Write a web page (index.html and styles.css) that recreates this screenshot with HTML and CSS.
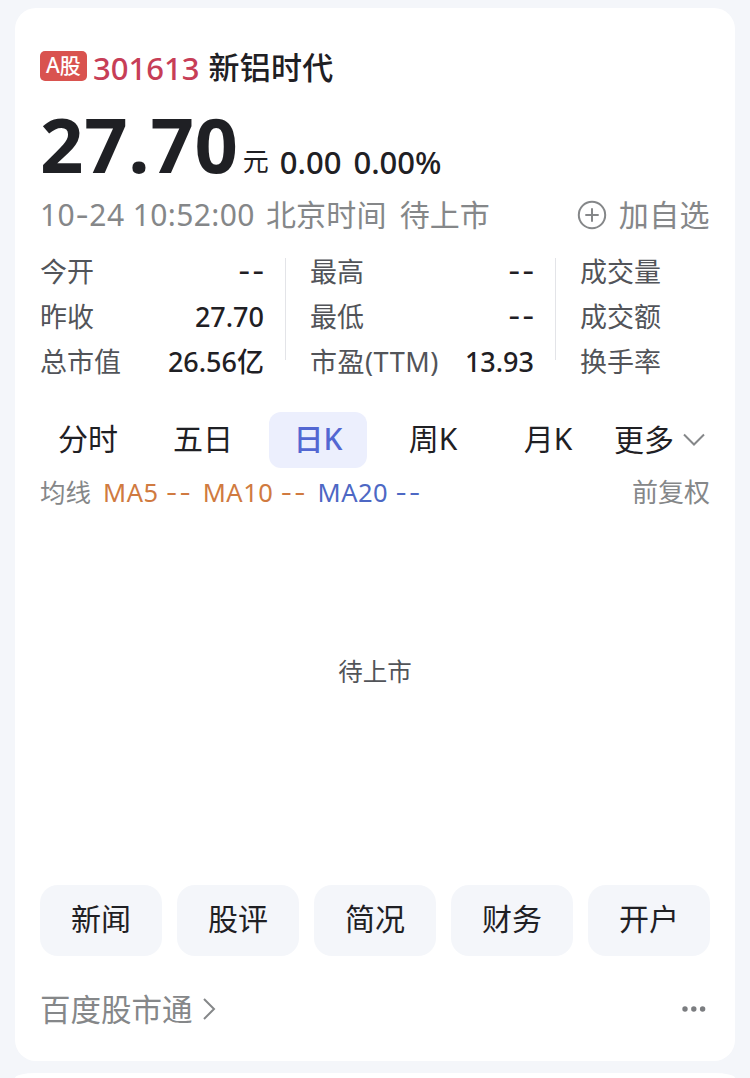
FILE: index.html
```html
<!DOCTYPE html>
<html lang="zh-CN">
<head>
    <meta charset="UTF-8">
    <meta name="viewport" content="width=device-width, initial-scale=1.0">
    <title>新铝时代 301613</title>
    <link rel="stylesheet" href="styles.css">
</head>
<body>

    <div class="card">
        <!-- Stock name -->
        <div class="title">
            <span class="badge">A股</span>
            <span class="code">301613</span>
            <span class="name">新铝时代</span>
        </div>

        <!-- Price -->
        <div class="price-row">
            <span class="price">27.70</span>
            <span class="unit">元</span>
            <span class="change">0.00</span>
            <span class="change percent">0.00%</span>
        </div>

        <div class="status">
            <span class="time">10<span class="dash">-</span>24 10:52:00</span>
            <span class="zone">北京时间</span>
            <span class="state">待上市</span>
            <a class="follow">
                <svg width="30" height="30" viewBox="0 0 30 30" fill="none" stroke="#858789" stroke-width="2">
                    <circle cx="15" cy="15" r="13.2"/>
                    <path d="M15 8.3v13.4M8.3 15h13.4"/>
                </svg>
                加自选
            </a>
        </div>

        <!-- Figures -->
        <div class="stats">
            <div class="col">
                <div class="item"><span>今开</span><b class="none">--</b></div>
                <div class="item"><span>昨收</span><b>27.70</b></div>
                <div class="item"><span>总市值</span><b>26.56亿</b></div>
            </div>
            <div class="col">
                <div class="item"><span>最高</span><b class="none">--</b></div>
                <div class="item"><span>最低</span><b class="none">--</b></div>
                <div class="item"><span class="pe">市盈(TTM)</span><b>13.93</b></div>
            </div>
            <div class="col">
                <div class="item"><span>成交量</span></div>
                <div class="item"><span>成交额</span></div>
                <div class="item"><span>换手率</span></div>
            </div>
        </div>

        <!-- Chart tabs -->
        <div class="tabs">
            <a class="tab">分时</a>
            <a class="tab">五日</a>
            <a class="tab active">日K</a>
            <a class="tab">周K</a>
            <a class="tab">月K</a>
            <a class="more">更多
                <svg width="24" height="14" viewBox="0 0 24 14" fill="none" stroke="#858789" stroke-width="2">
                    <path d="M2 1.5l10 10 10-10"/>
                </svg>
            </a>
        </div>

        <div class="legend">
            <span class="avg">均线</span>
            <span class="ma orange">MA5 <i>--</i></span>
            <span class="ma orange">MA10 <i>--</i></span>
            <span class="ma blue">MA20 <i>--</i></span>
            <span class="adjust">前复权</span>
        </div>

        <div class="chart">待上市</div>

        <div class="links">
            <a>新闻</a>
            <a>股评</a>
            <a>简况</a>
            <a>财务</a>
            <a>开户</a>
        </div>

        <div class="footer">
            <span>百度股市通</span>
            <svg class="arrow" width="14" height="24" viewBox="0 0 14 24" fill="none" stroke="#858789" stroke-width="2">
                <path d="M2 2l10 10-10 10"/>
            </svg>
            <svg class="dots" width="24" height="6" viewBox="0 0 24 6" fill="#7b7d80">
                <circle cx="3" cy="3" r="2.7"/>
                <circle cx="11.8" cy="3" r="2.7"/>
                <circle cx="20.6" cy="3" r="2.7"/>
            </svg>
        </div>
    </div>

    <div class="card next"></div>

</body>
</html>
```

FILE: styles.css
```css
* {
    box-sizing: border-box;
}
body {
    margin: 0;
    height: 1078px;
    padding: 8px 15px 0;
    overflow: hidden;
    background: #f4f6fa;
    color: #1f2024;
    font-family: "Noto Sans", "Noto Sans CJK SC", sans-serif;
}
.card {
    height: 1053px;
    padding: 37px 25px 0;
    border-radius: 21px;
    background: #fff;
}
.next {
    height: 5px;
    margin-top: 12px;
    padding: 0;
    border-radius: 21px 21px 0 0 / 5px 5px 0 0;
}
.title {
    display: flex;
    align-items: center;
    height: 46px;
    font-size: 31px;
    line-height: 44px;
    font-weight: 500;
}
.badge {
    width: 47px;
    height: 30px;
    margin-bottom: 5px;
    border-radius: 5px;
    background: #d9534f;
    color: #fff;
    font-size: 21px;
    line-height: 28px;
    text-align: center;
}
.code {
    margin-left: 6px;
    color: #c73e57;
}
.name {
    margin-left: 9px;
    padding-bottom: 2px;
    letter-spacing: 0.3px;
}
.price-row {
    display: flex;
    align-items: baseline;
    height: 99px;
    line-height: 106px;
}
.price {
    font-size: 76px;
    font-weight: 700;
    letter-spacing: 0.7px;
}
.unit {
    position: relative;
    top: -2px;
    margin-left: 4px;
    font-size: 26px;
}
.change {
    position: relative;
    top: 1px;
    margin-left: 11px;
    font-size: 31px;
    font-weight: 500;
}
.percent {
    margin-left: 12px;
}
.status {
    display: flex;
    align-items: center;
    height: 50px;
    color: #858789;
    font-size: 30px;
    line-height: 50px;
}
.time {
    letter-spacing: 0.4px;
}
.dash,
.none,
.ma i {
    font-family: Inter, sans-serif;
}
.zone {
    margin-left: 11px;
    letter-spacing: 0.2px;
}
.state {
    margin-left: 13px;
}
.follow {
    display: flex;
    align-items: center;
    gap: 12px;
    margin-left: auto;
    letter-spacing: 0.4px;
}
.stats {
    display: flex;
    height: 145px;
    padding-top: 9px;
    overflow: hidden;
}
.col {
    position: relative;
    flex: none;
    width: 270px;
    padding-right: 46px;
}
.col:not(:last-child)::after {
    content: "";
    position: absolute;
    top: 0;
    right: 24px;
    width: 1px;
    height: 102px;
    margin-top: 9px;
    background: #e3e4e8;
}
.item {
    display: flex;
    justify-content: space-between;
    height: 45px;
    color: #525459;
    font-size: 27px;
    line-height: 45px;
}
.item b {
    color: #1f2024;
    font-weight: 500;
}
.item .none {
    letter-spacing: 1.5px;
    margin-right: -2px;
}
.pe {
    letter-spacing: 0.5px;
}
.tabs {
    display: flex;
    align-items: center;
    gap: 17px;
    height: 56px;
    margin-top: 27px;
    margin-left: -1px;
    font-size: 30px;
    line-height: 54px;
}
.tab {
    width: 98px;
    height: 56px;
    border-radius: 12px;
    text-align: center;
}
.active {
    background: #eceffd;
    color: #5367d2;
    font-weight: 500;
}
.more {
    display: flex;
    align-items: center;
    gap: 8px;
    white-space: nowrap;
}
.legend {
    display: flex;
    height: 50px;
    color: #858789;
    font-size: 25.5px;
    line-height: 49px;
    white-space: nowrap;
}
.ma {
    margin-left: 12px;
    letter-spacing: 0.5px;
}
.ma i {
    font-style: normal;
    letter-spacing: 1.8px;
}
.ma + .ma {
    margin-left: 10px;
}
.orange {
    color: #d07a40;
}
.blue {
    color: #4d68c4;
}
.adjust {
    margin-left: auto;
    font-size: 26px;
}
.chart {
    height: 367px;
    padding-top: 134px;
    color: #525459;
    font-size: 24.5px;
    line-height: 40px;
    text-align: center;
}
.links {
    display: grid;
    grid-template-columns: repeat(5, 1fr);
    gap: 15px;
}
.links a {
    height: 71px;
    border-radius: 18px;
    background: #f4f6fa;
    font-size: 30px;
    line-height: 68px;
    text-align: center;
}
.footer {
    display: flex;
    align-items: center;
    height: 105px;
    color: #858789;
    font-size: 30.5px;
}
.footer span {
    padding-bottom: 2px;
}
.arrow {
    margin-left: 9px;
}
.dots {
    margin-left: auto;
    margin-right: 4px;
}
```
